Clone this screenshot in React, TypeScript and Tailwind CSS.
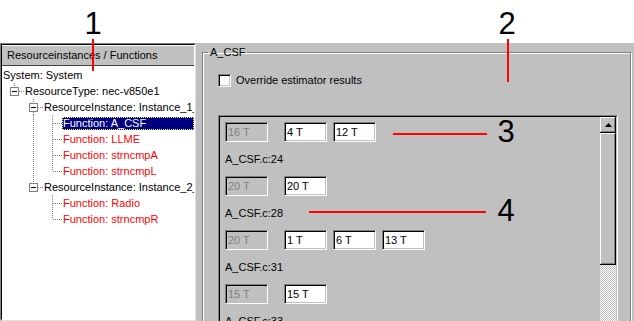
import React from "react";

type TreeNode = {
  label: string;
  level: number;
  box?: boolean;
  next?: boolean;
  guides?: boolean[];
  fn?: boolean;
  selected?: boolean;
};

const tree: TreeNode[] = [
  { label: "System: System", level: 0 },
  { label: "ResourceType: nec-v850e1", level: 1, box: true, next: false, guides: [] },
  { label: "ResourceInstance: Instance_1_1", level: 2, box: true, next: true, guides: [false] },
  { label: "Function: A_CSF", level: 3, next: true, guides: [false, true], fn: true, selected: true },
  { label: "Function: LLME", level: 3, next: true, guides: [false, true], fn: true },
  { label: "Function: strncmpA", level: 3, next: true, guides: [false, true], fn: true },
  { label: "Function: strncmpL", level: 3, next: false, guides: [false, true], fn: true },
  { label: "ResourceInstance: Instance_2_1", level: 2, box: true, next: false, guides: [false] },
  { label: "Function: Radio", level: 3, next: true, guides: [false, false], fn: true },
  { label: "Function: strncmpR", level: 3, next: false, guides: [false, false], fn: true },
];

const rows = [
  { boxes: ["16 T", "4 T", "12 T"], label: "A_CSF.c:24" },
  { boxes: ["20 T", "20 T"], label: "A_CSF.c:28" },
  { boxes: ["20 T", "1 T", "6 T", "13 T"], label: "A_CSF.c:31" },
  { boxes: ["15 T", "15 T"], label: "A_CSF.c:33" },
];

const dot = { stroke: "#808080", strokeDasharray: "1 1" };

const TreeCell = ({
  up = false,
  down = false,
  across = false,
  box = false,
}: {
  up?: boolean;
  down?: boolean;
  across?: boolean;
  box?: boolean;
}) => (
  <svg width="19" height="16" className="shrink-0">
    {up && <line x1="9.5" y1="0" x2="9.5" y2={box ? 4 : 8} {...dot} />}
    {down && <line x1="9.5" y1={box ? 13 : 8} x2="9.5" y2="16" {...dot} />}
    {across && <line x1={box ? 14 : 10} y1="8.5" x2="19" y2="8.5" {...dot} />}
    {box && (
      <>
        <rect x="5.5" y="4.5" width="8" height="8" fill="#fff" stroke="#808080" />
        <line x1="7" y1="8.5" x2="12" y2="8.5" stroke="#000" />
      </>
    )}
  </svg>
);

const TreeRow = ({ n }: { n: TreeNode }) => (
  <div className="flex h-[16px] items-center whitespace-nowrap">
    {n.level > 0 && <div className="w-[3px] shrink-0" />}
    {n.guides?.map((g, i) => (
      <TreeCell key={i} up={g} down={g} />
    ))}
    {n.level > 0 && <TreeCell up down={n.next} across box={n.box} />}
    <span
      className={
        n.selected
          ? "flex-1 h-[13px] leading-[13px] px-[1px] bg-[#000080] text-white outline-1 outline-dotted outline-[#ffff80] -outline-offset-1"
          : n.fn
          ? "h-[13px] leading-[13px] px-[1px] text-[#ff0000]"
          : "h-[13px] leading-[13px] px-[1px] text-black"
      }
    >
      {n.label}
    </span>
  </div>
);

const Field = ({ value, disabled }: { value: string; disabled?: boolean }) => (
  <div
    className={`w-[43px] h-[20px] shrink-0 flex items-center pl-[2px] border border-t-[#808080] border-l-[#808080] border-r-white border-b-white shadow-[inset_1px_1px_0_#000,inset_-1px_-1px_0_#c0c0c0] ${
      disabled ? "bg-[#c0c0c0] text-[#808080] mr-[10px]" : "bg-white text-black"
    }`}
  >
    {value}
  </div>
);

const raised =
  "bg-[#c0c0c0] shadow-[inset_-1px_-1px_0_#000,inset_1px_1px_0_#fff,inset_-2px_-2px_0_#808080]";

export default function App() {
  return (
    <div className="relative w-[634px] h-[321px] overflow-hidden bg-white font-['Liberation_Sans',Arial,sans-serif] text-[11px] text-black">
      <div className="h-[43px]" />
      <div className="flex h-[278px] bg-[#c0c0c0]">
        {/* left tree panel */}
        <div className="w-[196px] shrink-0 border border-t-[#808080] border-l-[#808080] border-r-[#dfdfdf] border-b-[#dfdfdf]">
          <div className="h-full flex flex-col bg-white border border-t-black border-l-black border-r-white border-b-white overflow-hidden">
            <div className="h-[21px] shrink-0 flex items-center pl-[5px] bg-[#c0c0c0] border-t border-t-white border-b border-b-[#404040]">
              Resourceinstances / Functions
            </div>
            <div className="pt-[1px] flex flex-col">
              {tree.map((n, i) => (
                <TreeRow key={i} n={n} />
              ))}
            </div>
          </div>
        </div>

        {/* right panel */}
        <div className="flex-1 pl-[6px] pr-[3px] pt-[3px]">
          <fieldset className="h-[300px] px-[5px] border border-[#808080] shadow-[inset_1px_1px_0_#fff,1px_1px_0_#fff]">
            <legend className="px-[2px] leading-[13px]">A_CSF</legend>
            <div className="pl-[10px]">
              <div className="mt-[15px] flex items-center gap-[5px] h-[13px]">
                <div className="w-[13px] h-[13px] bg-white border border-t-[#808080] border-l-[#808080] border-r-white border-b-white shadow-[inset_1px_1px_0_#000,inset_-1px_-1px_0_#c0c0c0]" />
                <span>Override estimator results</span>
              </div>

              <div className="mt-[28px] w-[400px] h-[220px] border border-t-[#808080] border-l-[#808080] border-r-white border-b-white">
                <div className="h-full flex border border-t-black border-l-black border-r-[#c0c0c0] border-b-[#c0c0c0]">
                  <div className="flex-1 pl-[5px] pt-[5px] flex flex-col">
                    {rows.map((r, i) => (
                      <div key={i} className="flex flex-col">
                        <div className="flex gap-[6px]">
                          {r.boxes.map((b, j) => (
                            <Field key={j} value={b} disabled={j === 0} />
                          ))}
                        </div>
                        <div className="h-[34px] flex items-center">{r.label}</div>
                      </div>
                    ))}
                  </div>
                  <div className="w-[16px] shrink-0 flex flex-col">
                    <div className={`h-[16px] shrink-0 flex items-center justify-center ${raised}`}>
                      <svg width="7" height="4">
                        <polygon points="3.5,0 7,4 0,4" fill="#000" />
                      </svg>
                    </div>
                    <div className={`h-[132px] shrink-0 ${raised}`} />
                    <div className="flex-1 bg-[image:repeating-conic-gradient(#c0c0c0_0%_25%,#ffffff_0%_50%)] bg-size-[2px_2px]" />
                  </div>
                </div>
              </div>
            </div>
          </fieldset>
        </div>
      </div>

      {/* annotations */}
      <div className="absolute left-[80px] top-[8px] w-[26px] text-center text-[31px] leading-none">1</div>
      <div className="absolute left-[92px] top-[39px] w-[2px] h-[32px] bg-[#ff0000]" />
      <div className="absolute left-[494px] top-[8px] w-[26px] text-center text-[31px] leading-none">2</div>
      <div className="absolute left-[507px] top-[39px] w-[2px] h-[43px] bg-[#ff0000]" />
      <div className="absolute left-[493px] top-[116px] w-[26px] text-center text-[31px] leading-none">3</div>
      <div className="absolute left-[393px] top-[133px] w-[94px] h-[2px] bg-[#ff0000]" />
      <div className="absolute left-[493px] top-[195px] w-[26px] text-center text-[31px] leading-none">4</div>
      <div className="absolute left-[309px] top-[211px] w-[177px] h-[2px] bg-[#ff0000]" />
    </div>
  );
}
